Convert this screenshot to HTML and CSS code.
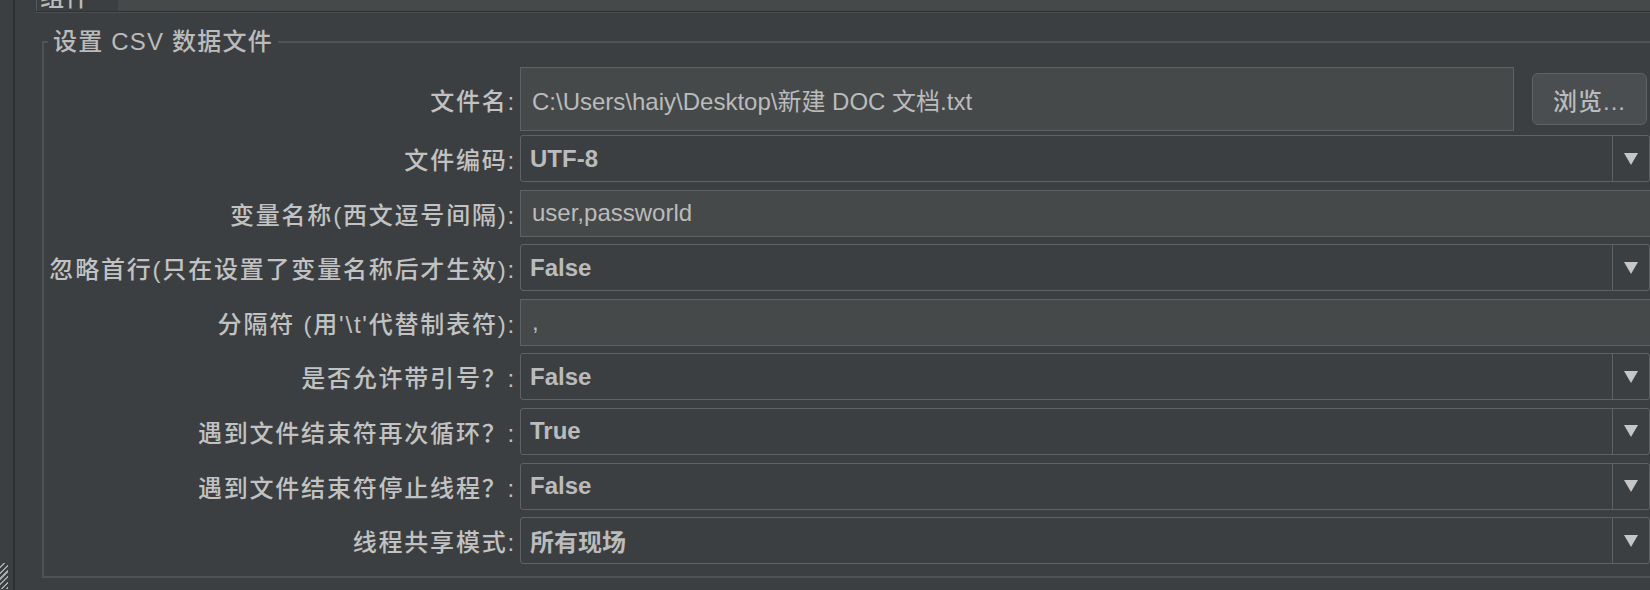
FILE: index.html
```html
<!DOCTYPE html>
<html lang="zh-CN">
<head>
    <meta charset="UTF-8">
    <title>CSV 数据文件设置</title>
    <link rel="stylesheet" href="styles.css">
</head>
<body>
    <div class="window">
        <div class="side">
            <div class="grip"></div>
        </div>
        <div class="main">
            <div class="tabbar">
                <div class="tab"><span>组件</span></div>
                <div class="tab-rest"></div>
            </div>

            <fieldset class="csv-box">
                <legend>设置 CSV 数据文件</legend>

                <div class="rows">
                    <div class="row row-file">
                        <label class="lbl">文件名:</label>
                        <div class="field field-tall">C:\Users\haiy\Desktop\新建 DOC 文档.txt</div>
                        <button class="btn">浏览...</button>
                    </div>
                    <div class="row">
                        <label class="lbl">文件编码:</label>
                        <div class="combo"><span class="combo-val">UTF-8</span><span class="combo-btn"><svg width="16" height="14" viewBox="0 0 16 14"><path d="M1 1h14L8 13z" fill="#c6c6c6"/></svg></span></div>
                    </div>
                    <div class="row">
                        <label class="lbl">变量名称(西文逗号间隔):</label>
                        <div class="field">user,passworld</div>
                    </div>
                    <div class="row">
                        <label class="lbl">忽略首行(只在设置了变量名称后才生效):</label>
                        <div class="combo"><span class="combo-val">False</span><span class="combo-btn"><svg width="16" height="14" viewBox="0 0 16 14"><path d="M1 1h14L8 13z" fill="#c6c6c6"/></svg></span></div>
                    </div>
                    <div class="row">
                        <label class="lbl">分隔符 (用'\t'代替制表符):</label>
                        <div class="field">,</div>
                    </div>
                    <div class="row">
                        <label class="lbl">是否允许带引号？:</label>
                        <div class="combo"><span class="combo-val">False</span><span class="combo-btn"><svg width="16" height="14" viewBox="0 0 16 14"><path d="M1 1h14L8 13z" fill="#c6c6c6"/></svg></span></div>
                    </div>
                    <div class="row">
                        <label class="lbl">遇到文件结束符再次循环？:</label>
                        <div class="combo"><span class="combo-val">True</span><span class="combo-btn"><svg width="16" height="14" viewBox="0 0 16 14"><path d="M1 1h14L8 13z" fill="#c6c6c6"/></svg></span></div>
                    </div>
                    <div class="row">
                        <label class="lbl">遇到文件结束符停止线程？:</label>
                        <div class="combo"><span class="combo-val">False</span><span class="combo-btn"><svg width="16" height="14" viewBox="0 0 16 14"><path d="M1 1h14L8 13z" fill="#c6c6c6"/></svg></span></div>
                    </div>
                    <div class="row">
                        <label class="lbl">线程共享模式:</label>
                        <div class="combo"><span class="combo-val">所有现场</span><span class="combo-btn"><svg width="16" height="14" viewBox="0 0 16 14"><path d="M1 1h14L8 13z" fill="#c6c6c6"/></svg></span></div>
                    </div>
                </div>
            </fieldset>
        </div>
    </div>
</body>
</html>
```

FILE: styles.css
```css
/* 全局 */
* {
    box-sizing: border-box;
    margin: 0;
    padding: 0;
}
html, body {
    height: 100%;
    overflow: hidden;
    background: #3c3f41;
    color: #bbbbbb;
    font-family: "Liberation Sans", "Noto Sans CJK SC", sans-serif;
}

.window {
    display: flex;
    width: 1650px;
    height: 590px;
}

/* 左侧分隔条 */
.side {
    width: 15px;
    border-right: 2px solid #2e3032;
    display: flex;
    flex-direction: column;
    justify-content: flex-end;
}
.grip {
    width: 8px;
    height: 26px;
    margin-bottom: 1px;
    background: repeating-linear-gradient(-45deg, #a8a8a8 0 1.5px, transparent 1.5px 4px);
}

.main {
    flex: 1;
    min-width: 0;
    display: flex;
    flex-direction: column;
}

/* 顶部页签 */
.tabbar {
    display: flex;
    height: 12px;
    margin-left: 21px;
    border-bottom: 1px solid #2f3133;
    box-shadow: 0 1px 0 #4b4f51;
}
.tab {
    width: 82px;
    overflow: hidden;
    border-left: 1px solid #55595b;
    background: #3c3f41;
    padding-left: 3px;
}
.tab span {
    display: block;
    margin-top: -14px;
    font-size: 24px;
    line-height: 24px;
    letter-spacing: 1.5px;
    font-weight: 500;
}
.tab-rest {
    flex: 1;
    background: #45494a;
}

/* 分组框 */
.csv-box {
    margin: 17px -2px 0 27px;
    padding: 12px 0 12px 0;
    border: 2px solid #505355;
}
.csv-box legend {
    margin-left: 4px;
    padding: 0 5px;
    font-size: 24px;
    line-height: 26px;
    letter-spacing: 1.2px;
    font-weight: 500;
}

.rows {
    display: flex;
    flex-direction: column;
    gap: 7.6px;
}
.row {
    display: flex;
    align-items: center;
    height: 47px;
}
.row-file {
    height: 64px;
    margin-bottom: -3.6px;
}

.lbl {
    width: 472px;
    margin-right: 4px;
    flex-shrink: 0;
    text-align: right;
    font-size: 24px;
    font-weight: 500;
    letter-spacing: 1.8px;
    white-space: nowrap;
    color: #c2c2c2;
}

/* 文本框 */
.field {
    flex: 1;
    height: 100%;
    margin-right: -4px;
    display: flex;
    align-items: center;
    padding-left: 11px;
    background: #45494a;
    border: 1px solid #5f6264;
    font-size: 24px;
    white-space: nowrap;
}
.field-tall {
    margin-right: 0;
}

.btn {
    width: 115px;
    height: 52px;
    margin: 0 3px 0 18px;
    flex-shrink: 0;
    background: #4a4e50;
    border: 1px solid #5f6264;
    border-radius: 6px;
    color: #bbbbbb;
    font-family: inherit;
    font-size: 24px;
    font-weight: 500;
    letter-spacing: 1px;
}

/* 下拉框 */
.combo {
    flex: 1;
    height: 100%;
    display: flex;
    align-items: center;
    background: #3c3f41;
    border: 1px solid #5f6264;
    border-radius: 3px;
}
.combo-val {
    flex: 1;
    padding-left: 9px;
    font-size: 24px;
    font-weight: bold;
    white-space: nowrap;
}
.combo-btn {
    width: 37px;
    height: 100%;
    display: flex;
    align-items: center;
    justify-content: center;
    border-left: 1px solid #5f6264;
}
```
